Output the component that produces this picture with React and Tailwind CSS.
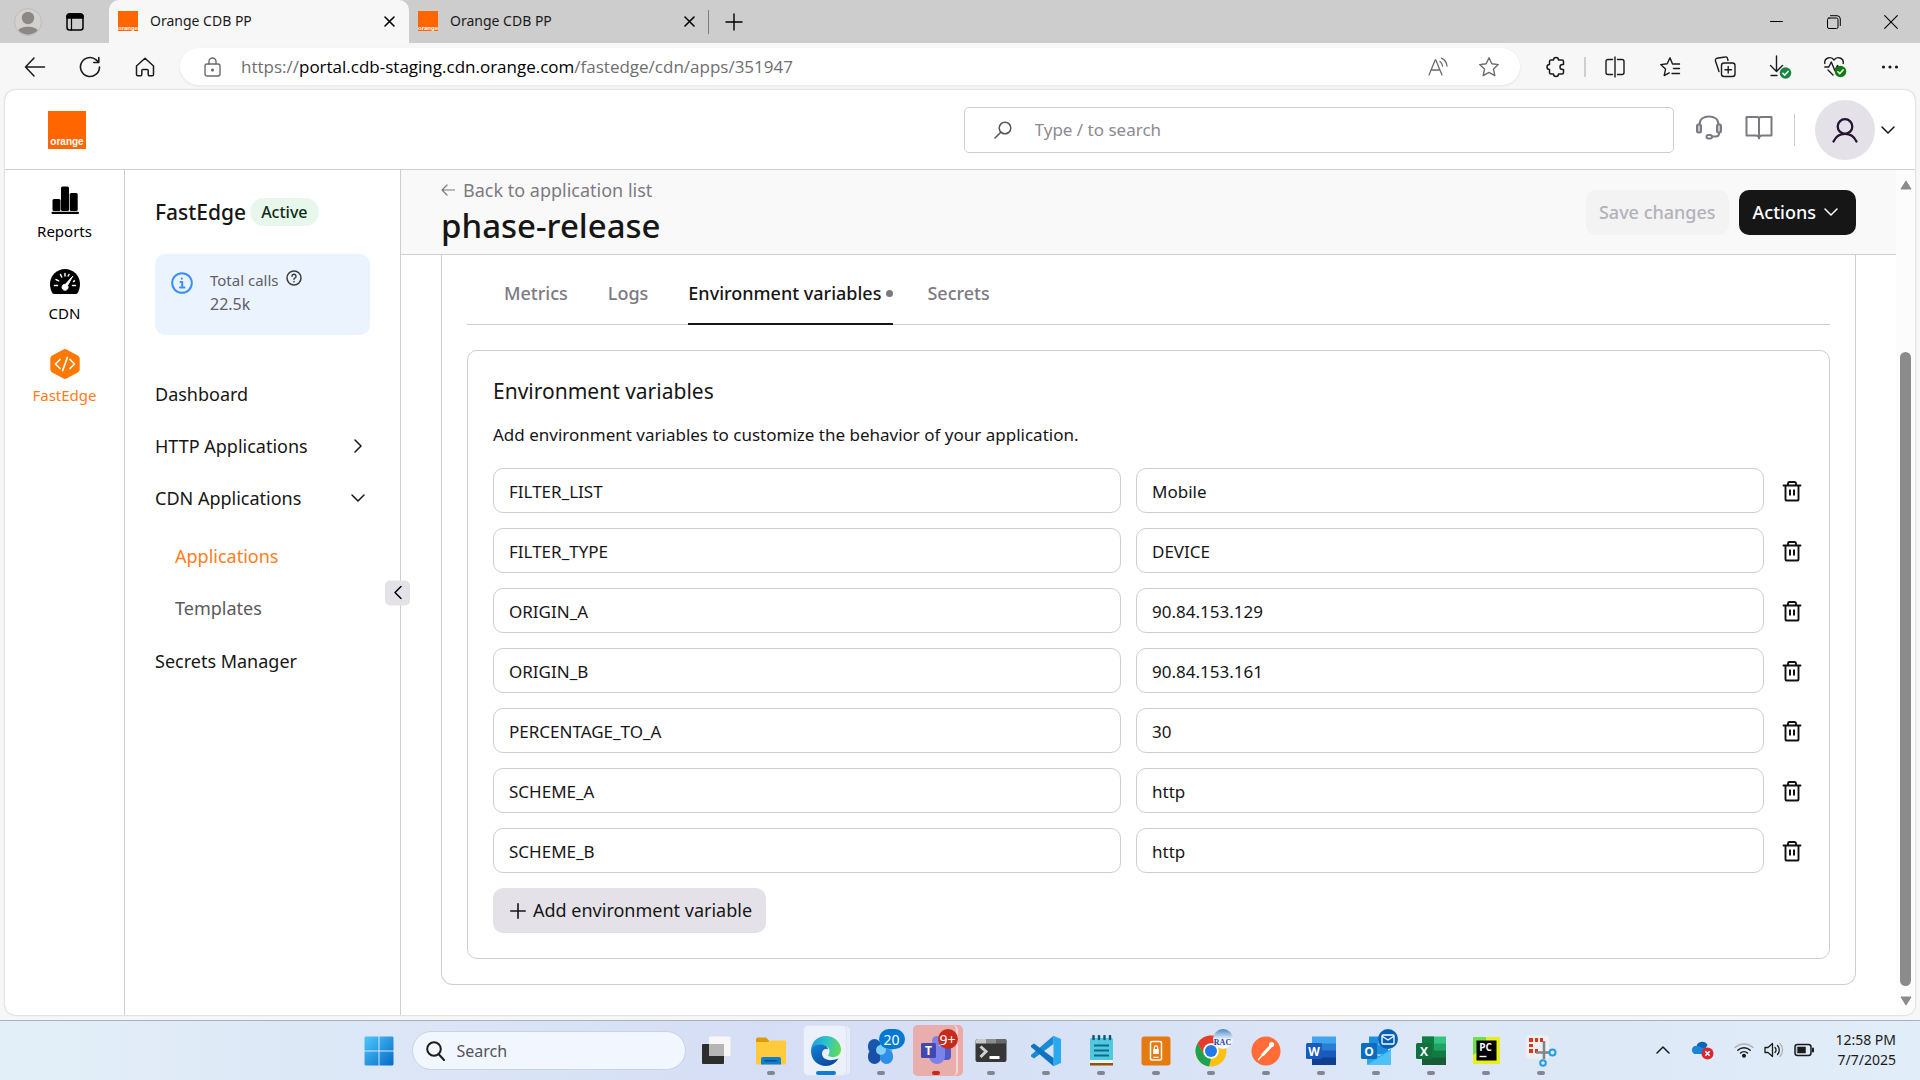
import React from "react";

const Svg = ({ w = 24, h, vb, sw = 1.5, className = "", children }) => (
  <svg
    width={w}
    height={h || w}
    viewBox={vb || `0 0 ${w} ${h || w}`}
    fill="none"
    stroke="currentColor"
    strokeWidth={sw}
    strokeLinecap="round"
    strokeLinejoin="round"
    className={`shrink-0 ${className}`}
    aria-hidden="true"
  >
    {children}
  </svg>
);

const Chevron = ({ d = "down", w = 14 }) => (
  <Svg w={w} vb="0 0 14 14" sw={1.5}>
    {d === "down" && <path d="M1 4l6 6 6-6" />}
    {d === "right" && <path d="M4 1l6 6-6 6" />}
    {d === "left" && <path d="M10 1L4 7l6 6" />}
    {d === "up" && <path d="M1 10l6-6 6 6" />}
  </Svg>
);

const OrangeLogo = ({ small }) =>
  small ? (
    <span className="flex h-5 w-5 shrink-0 items-end justify-center bg-[#ff6600] font-['Liberation_Sans'] text-[6px] leading-[6px] font-bold text-white">
      orange
    </span>
  ) : (
    <a
      href="#home"
      aria-label="Orange home"
      className="flex h-[38px] w-[38px] shrink-0 items-end justify-center bg-[#ff6600] pb-[2px] font-['Liberation_Sans'] text-[10px] leading-[10px] font-bold text-white"
    >
      orange
    </a>
  );

function BrowserTab({ active }) {
  return (
    <div
      className={`flex h-full w-[300px] items-center pl-[9px] pb-px ${
        active ? "rounded-t-[10px] bg-[#f7f7f7]" : ""
      }`}
    >
      <OrangeLogo small />
      <span className="ml-3 flex-1 text-[14px] leading-5 text-[#1b1b1b]">Orange CDB PP</span>
      <button type="button" aria-label="Close tab" className="mr-[14px] text-black">
        <Svg w={11} sw={1.6}>
          <path d="M1 1l9 9M10 1l-9 9" />
        </Svg>
      </button>
    </div>
  );
}

function TabStrip() {
  return (
    <div className="flex h-[43px] shrink-0 items-center bg-[#cdcdcd] pr-px">
      <button type="button" aria-label="Profile" className="ml-[14px]">
        <svg width="28" height="28" viewBox="0 0 28 28" className="block">
          <circle cx="14" cy="14" r="13.5" fill="#d3d1cd" stroke="#bdbbb8" />
          <circle cx="14" cy="10" r="6.2" fill="#8b8885" />
          <path d="M4.5 22.5c1.5-5 17.500-5 19 0a13 13 0 0 1-19 0z" fill="#8b8885" />
        </svg>
      </button>
      <button type="button" aria-label="Workspaces" className="mr-[25px] ml-6 text-black">
        <Svg w={18} sw={1.5}>
          <rect x="1" y="1" width="16" height="16" rx="2.500" />
          <path d="M1 5V3.500A2.500 2.500 0 0 1 3.500 1h11A2.500 2.500 0 0 1 17 3.500V5z" fill="currentColor" />
          <path d="M5.500 5v12" strokeWidth="1.2" />
        </Svg>
      </button>
      <BrowserTab active />
      <BrowserTab />
      <span className="-ml-px h-6 w-px bg-[#7c7c7c]" />
      <button type="button" aria-label="New tab" className="ml-4 text-black">
        <Svg w={18} sw={1.4}>
          <path d="M9 1v16M1 9h16" />
        </Svg>
      </button>
      <div className="ml-auto flex text-black">
        <button type="button" aria-label="Minimize" className="flex w-[57px] justify-center">
          <Svg w={13} sw={1}>
            <path d="M0.500 6.500h12" />
          </Svg>
        </button>
        <button type="button" aria-label="Restore" className="flex w-[57px] justify-center">
          <Svg w={14} sw={1}>
            <rect x="0.500" y="3" width="10.500" height="10.500" rx="1.500" />
            <path d="M3.500 0.700h6.500a3.300 3.300 0 0 1 3.300 3.300v6.500" />
          </Svg>
        </button>
        <button type="button" aria-label="Close" className="flex w-[57px] justify-center">
          <Svg w={14} sw={1.1}>
            <path d="M0.700 0.700l12.600 12.600M13.300 0.700L0.700 13.300" />
          </Svg>
        </button>
      </div>
    </div>
  );
}

const ToolButton = ({ label, children }) => (
  <button type="button" aria-label={label} className="flex w-[55px] justify-center">
    {children}
  </button>
);

const OkBadge = ({ cx, cy, fill }) => (
  <>
    <circle cx={cx} cy={cy} r="5.800" fill={fill} stroke="none" />
    <path d={`M${cx - 2.6} ${cy + 0.2}l1.900 1.900 3.300-3.700`} stroke="#fff" strokeWidth="1.500" />
  </>
);

function Toolbar() {
  return (
    <div className="flex h-[47px] shrink-0 items-center bg-[#f7f7f7] pr-[3px] pl-[7px] text-[#1b1b1b]">
      <ToolButton label="Back">
        <Svg w={22} sw={1.5}>
          <path d="M10 2L1.500 11l8.500 9M1.500 11h19" />
        </Svg>
      </ToolButton>
      <ToolButton label="Refresh">
        <Svg w={22} sw={1.6}>
          <path d="M20.500 11a9.500 9.500 0 1 1-3.300-7.200l2.300 2.200M19.800 1.500v5h-5" />
        </Svg>
      </ToolButton>
      <ToolButton label="Home">
        <Svg w={20} sw={1.5}>
          <path d="M1.500 9L10 1.200 18.500 9v8.500a1.300 1.300 0 0 1-1.300 1.300h-2.700a1.300 1.300 0 0 1-1.300-1.300V13.500a1 1 0 0 0-1-1H7.800a1 1 0 0 0-1 1v4a1.300 1.300 0 0 1-1.300 1.300H2.800a1.300 1.300 0 0 1-1.300-1.300z" />
        </Svg>
      </ToolButton>
      <div className="ml-2 flex h-[37px] flex-1 items-center rounded-full bg-white pr-5 pl-6 shadow-[0_1px_3px_rgba(0,0,0,0.08)]">
        <Svg w={17} h={20} sw={1.400} className="text-[#6b6b6b]">
          <rect x="1" y="7" width="15" height="12" rx="2" />
          <path d="M5 7V4.500a3.500 3.500 0 0 1 7 0V7" />
          <circle cx="8.500" cy="13" r="0.900" fill="currentColor" />
        </Svg>
        <p className="ml-5 flex-1 font-['Open_Sans',sans-serif] text-[17px] leading-6 text-[#6e6e6e]">
          https://<span className="text-black">portal.cdb-staging.cdn.orange.com</span>/fastedge/cdn/apps/351947
        </p>
        <button type="button" aria-label="Read aloud" className="mr-[30px] text-[#6b6b6b]">
          <Svg w={20} sw={1.300}>
            <path d="M1 18L7.200 3h.6L14 18M3 13h9M12 4.500a6 6 0 0 1 2.500 4.500M13.500 1.200A10 10 0 0 1 19 9" />
          </Svg>
        </button>
        <button type="button" aria-label="Add to favorites" className="text-[#6b6b6b]">
          <Svg w={22} sw={1.400}>
            <path d="M11 1.800l2.800 6 6.500.8-4.800 4.500 1.300 6.500L11 16.400l-5.800 3.200 1.300-6.500L1.700 8.600l6.500-.8z" />
          </Svg>
        </button>
      </div>
      <div className="ml-2 flex items-center">
        <ToolButton label="Extensions">
          <Svg w={22} sw={1.500}>
            <path d="M4.500 5.500A1.500 1.500 0 0 1 6 4h2.500a2.500 2.500 0 0 1 5 0H17a1.500 1.500 0 0 1 1.500 1.500v3h-1a2.500 2.500 0 0 0 0 5h1v3A1.500 1.500 0 0 1 17 18h-3.500a2.500 2.500 0 0 1-5 0H6a1.500 1.500 0 0 1-1.500-1.500v-3a2.500 2.500 0 0 1 0-5z" />
          </Svg>
        </ToolButton>
        <span className="mx-px h-5 w-0.5 bg-[#cfcfcf]" />
        <ToolButton label="Split screen">
          <Svg w={22} sw={1.400}>
            <path d="M11 1v20M8.500 3.500H4A2 2 0 0 0 2 5.500v11a2 2 0 0 0 2 2h4.500M13.500 3.500H18a2 2 0 0 1 2 2v11a2 2 0 0 1-2 2h-4.500" />
          </Svg>
        </ToolButton>
        <ToolButton label="Favorites">
          <Svg w={22} sw={1.400}>
            <path d="M20.500 8h-7L11 1.800l-2.800 6-6.500.8 4.800 4.500-1.300 6.500 5-2.800M14.500 12.500h6M13 17.500h7.500" />
          </Svg>
        </ToolButton>
        <ToolButton label="Collections">
          <Svg w={22} sw={1.400}>
            <path d="M5 15.500L1.500 5a2.200 2.200 0 0 1 1.500-2.800L11 1a2 2 0 0 1 2.500 1.500l.5 2" />
            <rect x="7.500" y="7" width="13.500" height="13.500" rx="2.500" />
            <path d="M14.200 10.500v6.500M11 13.700h6.500" />
          </Svg>
        </ToolButton>
        <ToolButton label="Downloads">
          <Svg w={24} sw={1.400}>
            <path d="M8.500 1v15M2.500 10.500l6 6 6-6M3 20.500h6" />
            <OkBadge cx={17.500} cy={18} fill="#1a8540" />
          </Svg>
        </ToolButton>
        <ToolButton label="Browser essentials">
          <Svg w={24} sw={1.400}>
            <path d="M1.800 8.500C1 3 8 .5 11 5c3-4.500 10-2 9.200 3.500M1.800 12h4l2.500-5 3.500 8.500 2.700-5 1 1.500h3M5 15l5 5" />
            <OkBadge cx={17.500} cy={16.500} fill="#107c10" />
          </Svg>
        </ToolButton>
        <ToolButton label="More">
          <Svg w={18} h={6} sw={0}>
            <g fill="currentColor">
              <circle cx="2.500" cy="3" r="1.600" />
              <circle cx="9" cy="3" r="1.600" />
              <circle cx="15.500" cy="3" r="1.600" />
            </g>
          </Svg>
        </ToolButton>
      </div>
    </div>
  );
}

function AppHeader() {
  return (
    <header className="flex h-20 shrink-0 items-center justify-end border-b border-[#cfcdd2] pr-5 pl-[43px]">
      <div className="mr-auto">
        <OrangeLogo />
      </div>
      <div className="flex h-[46px] w-[37vw] items-center rounded-[5px] border border-[#cfcdd2] px-[29px]">
        <Svg w={18} sw={1.500} className="text-[#55525b]">
          <circle cx="11" cy="7" r="5.800" />
          <path d="M6.800 11.200L1 17" />
        </Svg>
        <input
          type="text"
          aria-label="Search"
          placeholder="Type / to search"
          className="ml-[23px] w-full text-[17px] leading-6 outline-none placeholder:text-[#8d8a92]"
        />
      </div>
      <button type="button" aria-label="Support" className="ml-[21px] pb-1 text-[#7d7982]">
        <Svg w={28} sw={2}>
          <path d="M4.500 11v-.5C4.500 5.500 8.500 2.500 14 2.500s9.500 3 9.500 8v.5M24 18v1.500a3 3 0 0 1-3 3h-4" />
          <rect x="2" y="10.500" width="4" height="8" rx="1.500" fill="#c9c7cc" />
          <rect x="22" y="10.500" width="4" height="8" rx="1.500" fill="#c9c7cc" />
          <rect x="11.500" y="21" width="5.500" height="3.500" rx="1.700" />
        </Svg>
      </button>
      <button type="button" aria-label="Documentation" className="ml-[22px] pb-1 text-[#7d7982]">
        <Svg w={28} h={26} sw={2}>
          <path d="M14 3.500A2 2 0 0 0 12 2H1.500v18.500H11a3 3 0 0 1 3 3 3 3 0 0 1 3-3h9.500V2H16a2 2 0 0 0-2 1.500zM14 3.500V23" />
        </Svg>
      </button>
      <span className="ml-[21px] h-8 w-px bg-[#cfcdd2]" />
      <button
        type="button"
        aria-label="Account"
        className="ml-5 flex items-center gap-[6px] text-[#161616]"
      >
        <span className="flex h-[60px] w-[60px] items-center justify-center rounded-full bg-[#e4e2e8] text-[#261433]">
          <Svg w={26} h={26} sw={2.300}>
            <circle cx="13" cy="9.500" r="7.300" />
            <path d="M1.500 24.500C4 19 8 16.800 13 16.800s9 2.200 11.500 7.700" />
          </Svg>
        </span>
        <Chevron />
      </button>
    </header>
  );
}

const railItems = [
  {
    label: "Reports",
    icon: (
      <svg width="28" height="30" viewBox="0 0 28 30" fill="currentColor">
        <rect x="1.500" y="14" width="8" height="12" rx="1.500" />
        <rect x="10" y="1.500" width="8" height="24.500" rx="1.500" />
        <rect x="18.700" y="8" width="8" height="18" rx="1.500" />
        <rect x="0.500" y="26.800" width="27.500" height="2.200" rx="1" />
      </svg>
    ),
  },
  {
    label: "CDN",
    icon: (
      <svg width="30" height="30" viewBox="0 0 30 30">
        <path d="M15 2C7 2 0 8.500 0 17c0 4 1.200 7 2.500 9.200.4.600.8.800 1.500.8h22c.7 0 1.100-.2 1.500-.8C28.800 24 30 21 30 17 30 8.500 23 2 15 2z" fill="currentColor" />
        <g stroke="#fff" strokeWidth="1.500" strokeLinecap="round">
          <path d="M4.500 18.500h3M22.500 18.500h3M6 12.500l2.600 1.300M10.500 7.500l1.200 2.500M15 6.500v2.500M19 7.500l-.8 1.500M23.500 14.500l1-.6" />
        </g>
        <path d="M22.700 9.200L17.500 18.500a3 3 0 1 1-2-1.200z" fill="#fff" stroke="#fff" strokeWidth="1" />
      </svg>
    ),
  },
  {
    label: "FastEdge",
    active: true,
    icon: (
      <svg width="30" height="30" viewBox="0 0 30 30">
        <path d="M13 .7a4 4 0 0 1 4 0l10.800 5.800a3.500 3.500 0 0 1 1.900 3V20.500a3.500 3.500 0 0 1-1.900 3L17 29.300a4 4 0 0 1-4 0L2.200 23.500a3.500 3.500 0 0 1-1.900-3V9.500a3.500 3.500 0 0 1 1.900-3z" fill="#ff7900" />
        <path d="M10 10.500L5.500 15l4.500 4.500M20 10.500l4.500 4.500-4.500 4.500M17.300 8.500l-4.600 13" fill="none" stroke="#fff" strokeWidth="1.700" strokeLinecap="round" strokeLinejoin="round" />
      </svg>
    ),
  },
];

function Rail() {
  return (
    <nav aria-label="Products" className="flex w-[120px] shrink-0 flex-col gap-[26px] border-r border-[#cfcdd2] pt-[15px]">
      {railItems.map((it) => (
        <a
          key={it.label}
          href={`#${it.label.toLowerCase()}`}
          className={`flex flex-col items-center text-[15px] leading-5 ${
            it.active ? "text-[#ff7d1a]" : "text-black"
          }`}
        >
          <span className="mb-[6px] flex h-[30px] items-center">{it.icon}</span>
          {it.label}
        </a>
      ))}
    </nav>
  );
}

const sideRow = "flex h-[52px] w-full items-center justify-between";

function Sidebar() {
  return (
    <aside className="relative w-[276px] shrink-0 border-r border-[#cfcdd2] px-[30px] pt-7 text-[#161616]">
      <div className="flex items-center gap-1">
        <h2 className="text-[21px] leading-7 font-medium">FastEdge</h2>
        <span className="rounded-full bg-[#e8f7ec] px-[11px] text-[16px] leading-7 font-medium text-[#0f2b17]">
          Active
        </span>
      </div>
      <div className="mt-7 flex h-[81px] rounded-[10px] bg-[#ebf3fe] pt-[14px] pl-4 text-[#5f5f66]">
        <Svg w={22} sw={2} className="mt-1 text-[#3b8ff5]">
          <circle cx="11" cy="11" r="9.800" />
          <path d="M9.500 10h1.700v5.200M9 15.500h4.500M10.800 6.500v.2" />
        </Svg>
        <div className="ml-[17px]">
          <p className="flex items-center gap-[7px] text-[15px] leading-6">
            Total calls
            <Svg w={16} sw={1.500} className="mb-1 text-[#3c3c42]">
              <circle cx="8" cy="8" r="7" />
              <path d="M6 6.300a2 2 0 1 1 2.800 1.800c-.6.300-.8.600-.8 1.100M8 11.600v.1" />
            </Svg>
          </p>
          <p className="text-[16px] leading-6">22.5k</p>
        </div>
      </div>
      <nav aria-label="FastEdge" className="mt-[33px] text-[18px] leading-6">
        <a href="#dashboard" className={sideRow}>Dashboard</a>
        <button type="button" className={sideRow}>
          HTTP Applications
          <span className="mr-[5px]"><Chevron d="right" /></span>
        </button>
        <button type="button" className={sideRow}>
          CDN Applications
          <span className="mr-[5px]"><Chevron /></span>
        </button>
        <div className="pt-[6px] pb-px pl-5">
          <a href="#applications" className={`${sideRow} text-[#ff7d1a]`}>Applications</a>
          <a href="#templates" className={`${sideRow} text-[#5a5a5a]`}>Templates</a>
        </div>
        <a href="#secrets-manager" className={sideRow}>Secrets Manager</a>
      </nav>
      <button
        type="button"
        aria-label="Collapse sidebar"
        className="absolute top-1/2 -right-[10px] flex h-[25px] w-[25px] -translate-y-1/2 items-center justify-center rounded-[5px] bg-[#e4e2e8] text-black"
      >
        <Chevron d="left" />
      </button>
    </aside>
  );
}

const variables = [
  ["FILTER_LIST", "Mobile"],
  ["FILTER_TYPE", "DEVICE"],
  ["ORIGIN_A", "90.84.153.129"],
  ["ORIGIN_B", "90.84.153.161"],
  ["PERCENTAGE_TO_A", "30"],
  ["SCHEME_A", "http"],
  ["SCHEME_B", "http"],
];

const field =
  "h-[45px] w-full min-w-0 rounded-[10px] border border-[#cfcdd2] px-[15px] pt-px text-[17px] leading-6 text-[#161616] outline-none";

function Content() {
  return (
    <main className="flex min-w-0 flex-1 flex-col">
      <div className="flex h-[85px] shrink-0 items-center justify-between border-b border-[#cfcdd2] bg-[#f9f9f9] px-10">
        <div className="pt-[3px]">
          <a href="#apps" className="flex items-center gap-2 text-[18px] leading-6 text-[#7d7982]">
            <Svg w={14} sw={1.200}>
              <path d="M6 2L1 7l5 5M1 7h12.500" />
            </Svg>
            Back to application list
          </a>
          <h1 className="text-[33px] leading-[48px] font-medium text-[#161616]">phase-release</h1>
        </div>
        <div className="flex gap-[10px]">
          <button type="button" disabled className="h-[45px] rounded-[10px] bg-[#f3f3f3] px-[13px] text-[18px] font-medium text-[#b4b1b9]">
            Save changes
          </button>
          <button type="button" className="flex h-[45px] items-center gap-2 rounded-[10px] bg-[#161616] pr-[18px] pl-[14px] text-[18px] font-medium text-white">
            Actions
            <Chevron />
          </button>
        </div>
      </div>
      <div className="mx-10 rounded-b-[12px] border-x border-b border-[#cfcdd2] px-[25px] pb-[25px]">
        <div role="tablist" className="flex h-[70px] gap-10 border-b border-[#cfcdd2] pl-[37px] text-[18px] font-medium text-[#7d7982]">
          <button type="button" role="tab" aria-selected="false" className="pt-2">Metrics</button>
          <button type="button" role="tab" aria-selected="false" className="pt-2">Logs</button>
          <button
            type="button"
            role="tab"
            aria-selected="true"
            className="-mb-px flex items-center gap-[5px] border-b-2 border-[#161616] pt-2 text-[#161616]"
          >
            Environment variables
            <span className="h-[7px] w-[7px] rounded-full bg-[#7d7982]" />
          </button>
          <button type="button" role="tab" aria-selected="false" className="-ml-1.5 pt-2">Secrets</button>
        </div>
        <section className="mt-[25px] rounded-[10px] border border-[#cfcdd2] p-[25px] text-[#161616]">
          <h2 className="text-[21px] leading-[30px]">Environment variables</h2>
          <p className="mt-4 mb-5 text-[17px] leading-[26px]">
            Add environment variables to customize the behavior of your application.
          </p>
          <div className="flex flex-col gap-[15px]">
            {variables.map(([name, value]) => (
              <div key={name} className="grid grid-cols-[1fr_1fr_25px] items-center gap-[15px]">
                <input type="text" aria-label="Variable name" defaultValue={name} className={field} />
                <input type="text" aria-label={`${name} value`} defaultValue={value} className={field} />
                <button type="button" aria-label={`Delete ${name}`} className="flex justify-center text-[#111]">
                  <Svg w={20} h={22} sw={1.900}>
                    <path d="M1.500 5.500h17M3.500 5.500v14a1 1 0 0 0 1 1h11a1 1 0 0 0 1-1v-14M6 5V3.500a1.500 1.500 0 0 1 1.500-1.500h5A1.500 1.500 0 0 1 14 3.500V5" />
                    <path d="M8 9.500v6M12 9.500v6" strokeWidth="2" strokeLinecap="butt" />
                  </Svg>
                </button>
              </div>
            ))}
          </div>
          <button type="button" className="mt-[15px] flex h-[45px] items-center gap-[7px] rounded-[10px] bg-[#e4e2e8] pr-[14px] pl-[17px] text-[18px]">
            <Svg w={16} sw={1.600}>
              <path d="M8 0.800v14.400M0.800 8h14.400" />
            </Svg>
            Add environment variable
          </button>
        </section>
      </div>
    </main>
  );
}

function Scrollbar() {
  return (
    <div className="flex w-[19px] shrink-0 flex-col items-center bg-[#fcfcfc] pt-[10px] pb-[9px]">
      <svg width="12" height="10" viewBox="0 0 12 10" className="shrink-0" fill="#8b8b8b">
        <path d="M6 1l5 8H1z" stroke="#8b8b8b" strokeLinejoin="round" />
      </svg>
      <span className="w-px flex-[162]" />
      <span className="w-[11px] flex-[634] rounded-full bg-[#8b8b8b]" />
      <svg width="12" height="10" viewBox="0 0 12 10" className="mt-[10px] shrink-0" fill="#8b8b8b">
        <path d="M6 9l5-8H1z" stroke="#8b8b8b" strokeLinejoin="round" />
      </svg>
    </div>
  );
}

const AppSvg = ({ children }) => (
  <svg width="32" height="32" viewBox="0 0 32 32" aria-hidden="true">{children}</svg>
);

const Glyph = ({ x, y, s = 12, children }) => (
  <text x={x} y={y} fontSize={s} fontWeight="700" textAnchor="middle" fill="#fff" fontFamily="Open Sans, sans-serif">
    {children}
  </text>
);

const OfficeIcon = ({ letter, c }) => (
  <AppSvg>
    <rect x="7" y="1.500" width="24" height="7.500" fill={c[0]} />
    <rect x="7" y="8.500" width="24" height="7.500" fill={c[1]} />
    <rect x="7" y="15.500" width="24" height="7.500" fill={c[2]} />
    <rect x="7" y="22.500" width="24" height="7.500" fill={c[3]} />
    {letter === "X" && <path d="M7 1.500h12v21H7z" fill="#107c41" />}
    <rect x="1" y="8" width="16" height="16" rx="1.500" fill={c[4]} />
    <Glyph x="9" y="20.500">{letter}</Glyph>
  </AppSvg>
);

const apps = [
  {
    name: "Task View",
    idle: true,
    icon: (
      <AppSvg>
        <rect x="2" y="9" width="22" height="20" rx="1" fill="#2d2d2d" />
        <rect x="9" y="1.500" width="21.500" height="19.500" rx="1" fill="#f7f7f7" />
        <path d="M9 9h15v12H9z" fill="#b5b5b5" />
      </AppSvg>
    ),
  },
  {
    name: "File Explorer",
    icon: (
      <AppSvg>
        <path d="M1 4.500a2 2 0 0 1 2-2h8l3 3v5H1z" fill="#dd9a08" />
        <path d="M1 7h12l2-1.500h16V28a1.500 1.500 0 0 1-1.500 1.500h-27A1.500 1.500 0 0 1 1 28z" fill="#ffcb3d" />
        <path d="M6 29.500V24a2 2 0 0 1 2-2h16a2 2 0 0 1 2 2v5.500z" fill="#0f7fd0" />
        <path d="M9.500 25.800h13" stroke="#0a4f8f" strokeWidth="1.500" />
      </AppSvg>
    ),
  },
  {
    name: "Microsoft Edge",
    focus: true,
    icon: (
      <AppSvg>
        <defs>
          <linearGradient id="edgeTop" x1="0" y1="0.300" x2="1" y2="0.500">
            <stop offset="0" stopColor="#1b9de2" />
            <stop offset="0.500" stopColor="#2fc3c8" />
            <stop offset="1" stopColor="#62dc55" />
          </linearGradient>
          <linearGradient id="edgeLow" x1="0" y1="0" x2="0.600" y2="1">
            <stop offset="0" stopColor="#1583d8" />
            <stop offset="1" stopColor="#0c4a9c" />
          </linearGradient>
        </defs>
        <path d="M1 15C1.500 6.500 8 1 16 1s15 6 15 13.500c0 5-4 7.500-8 7.500-3.500 0-5.500-1-4.500-2.500 2.500-3.500.5-9-5.500-9C7 10.500 2 12 1 15z" fill="url(#edgeTop)" />
        <path d="M1 16c0-4 5-7 10-6.500 5 .3 7 3 7 5-3-1.500-6 .5-6 4 0 5 6 9 16.500 5C26 28 21 31 16 31 7.500 31 1 24.500 1 16z" fill="url(#edgeLow)" />
      </AppSvg>
    ),
  },
  {
    name: "Outlook contacts",
    badge: "20",
    icon: (
      <AppSvg>
        <rect x="3" y="4" width="13" height="15" rx="6.500" fill="#1559ad" />
        <rect x="15" y="4" width="13" height="15" rx="6.500" fill="#4fb3f2" />
        <rect x="3" y="14" width="13" height="15" rx="6.500" fill="#1b4fa5" />
        <rect x="15" y="14" width="13" height="15" rx="6.500" fill="#2f8fe6" />
        <circle cx="16" cy="15" r="5" fill="#7fd0fa" />
      </AppSvg>
    ),
  },
  {
    name: "Microsoft Teams",
    badge: "9+",
    alert: true,
    icon: (
      <AppSvg>
        <circle cx="26" cy="7" r="3.500" fill="#5059c9" />
        <rect x="18" y="11" width="13" height="14" rx="4" fill="#5059c9" />
        <circle cx="17" cy="6" r="5" fill="#7b83eb" />
        <path d="M9 11h16v10a8 8 0 0 1-16 0z" fill="#7b83eb" />
        <rect x="1" y="8" width="15" height="15" rx="1.500" fill="#4248b0" />
        <Glyph x="8.500" y="20">T</Glyph>
      </AppSvg>
    ),
  },
  {
    name: "Terminal",
    icon: (
      <AppSvg>
        <path d="M.5 6a2 2 0 0 1 2-2h27a2 2 0 0 1 2 2v19a2 2 0 0 1-2 2h-27a2 2 0 0 1-2-2z" fill="#363636" />
        <path d="M.5 8.500V6a2 2 0 0 1 2-2H11v4.500z" fill="#c8c8c8" />
        <path d="M11 4h10v4.500H11z" fill="#8d8d8d" />
        <path d="M21 4h8.500a2 2 0 0 1 2 2v2.500H21z" fill="#686868" />
        <path d="M5.500 11.500l5.500 5-5.500 5.500" fill="none" stroke="#d0d0d0" strokeWidth="3" />
        <path d="M14.500 22.500h10" stroke="#fff" strokeWidth="3" />
      </AppSvg>
    ),
  },
  {
    name: "Visual Studio Code",
    icon: (
      <AppSvg>
        <path d="M23.500.8L31 4v24l-7.500 3.200z" fill="#29a9f2" />
        <path d="M23.500.8V9L4 23.500 1 21.500v-1.500z" fill="#1a8ad4" />
        <path d="M23.500 31.200V23L4 8.500 1 10.500V12z" fill="#0f74c0" />
      </AppSvg>
    ),
  },
  {
    name: "Notepad",
    icon: (
      <AppSvg>
        <path d="M5 27h23v3.500H5z" fill="#9a5200" />
        <rect x="5" y="3" width="23" height="25" rx="1.500" fill="#50c8de" />
        <path d="M5 25h23v3H5z" fill="#e9f5f8" />
        <path d="M8.500 1v3M14 1v3M19.500 1v3M25 1v3" stroke="#0b5c78" strokeWidth="2.500" strokeLinecap="round" />
        <path d="M9 10.500h15M9 15.500h15M9 20.500h15" stroke="#0a6a89" strokeWidth="1.800" />
      </AppSvg>
    ),
  },
  {
    name: "Secure mobile",
    icon: (
      <AppSvg>
        <rect x="1.500" y="1.500" width="29" height="29" rx="3" fill="#e57a10" />
        <rect x="10.500" y="6.500" width="11" height="18.500" rx="1.500" fill="none" stroke="#fff" strokeWidth="1.500" />
        <rect x="13.200" y="14" width="5.600" height="5" fill="#fff" />
        <path d="M14.300 14v-1.500a1.700 1.700 0 0 1 3.400 0V14M13.500 22.300h5" fill="none" stroke="#fff" strokeWidth="1.200" />
      </AppSvg>
    ),
  },
  {
    name: "Google Chrome",
    icon: (
      <AppSvg>
        <circle cx="16" cy="16" r="15.500" fill="#fbc116" />
        <path d="M2.600 8.200A15.500 15.500 0 0 1 29.400 8.200H16L9.300 19.900z" fill="#e33b2e" />
        <path d="M2.600 8.200L9.300 19.900 16 23.700l-2 7.700A15.500 15.500 0 0 1 2.600 8.200z" fill="#1ea151" />
        <circle cx="16" cy="16" r="7.800" fill="#fff" />
        <circle cx="16" cy="16" r="6" fill="#2478e8" />
      </AppSvg>
    ),
    overlay: "rac",
  },
  {
    name: "Postman",
    icon: (
      <AppSvg>
        <circle cx="16" cy="16" r="14.500" fill="#ff6c37" />
        <circle cx="21.500" cy="9.500" r="2.600" fill="#fff" />
        <path d="M20.500 11.500l-7.500 8" stroke="#fff" strokeWidth="3.200" strokeLinecap="round" />
        <path d="M13 19.500l-4.500 5" stroke="#fff" strokeWidth="1.500" strokeLinecap="round" />
      </AppSvg>
    ),
  },
  { name: "Word", icon: <OfficeIcon letter="W" c={["#41a5ee", "#2b7cd3", "#185abd", "#103f91", "#185abd"]} /> },
  {
    name: "Outlook",
    icon: (
      <AppSvg>
        <rect x="9" y="1.500" width="19" height="18" fill="#1d8fe0" />
        <path d="M18 1.500h10v9H18z" fill="#50b9f5" />
        <path d="M7 14l12 7 12-7v14.500a1.500 1.500 0 0 1-1.500 1.500h-21A1.500 1.500 0 0 1 7 28.500z" fill="#28a8ea" />
        <path d="M7 30l24-15v13.500a1.500 1.500 0 0 1-1.500 1.500z" fill="#4cc2f7" />
        <rect x="1" y="8" width="16" height="16" rx="1.500" fill="#0f6cbd" />
        <Glyph x="9" y="20.500">O</Glyph>
      </AppSvg>
    ),
    overlay: "mail",
  },
  { name: "Excel", icon: <OfficeIcon letter="X" c={["#33c481", "#21a366", "#107c41", "#185c37", "#0f7040"]} /> },
  {
    name: "PyCharm",
    icon: (
      <AppSvg>
        <rect x="3" y="2" width="27" height="27" fill="#e6ef1c" />
        <path d="M3 2h13v10L3 20z" fill="#6fe04a" />
        <rect x="6.500" y="5.500" width="20" height="20" fill="#000" />
        <Glyph x="15.500" y="16" s={10}>PC</Glyph>
        <path d="M9.500 21.500h7" stroke="#fff" strokeWidth="1.400" />
      </AppSvg>
    ),
  },
  {
    name: "Snipping Tool",
    icon: (
      <AppSvg>
        <rect x="1" y="0.500" width="23" height="23" rx="2" fill="#efeff1" />
        <path d="M4 3h4v4H4zM10 3h3v4h-3zM15 3h3v4h-3zM4 9h4v3H4zM4 14h4v4H4zM10 14h3v4h-3z" fill="#d8371a" />
        <path d="M19 6v18M11 17.500h14" stroke="#7f858c" strokeWidth="2.600" />
        <circle cx="27.500" cy="17.500" r="3" fill="none" stroke="#1d9fe0" strokeWidth="2" />
        <circle cx="18" cy="28" r="2.800" fill="none" stroke="#1d9fe0" strokeWidth="2" />
      </AppSvg>
    ),
  },
];

function TaskbarApp({ app }) {
  return (
    <button type="button" aria-label={app.name} className="relative flex h-full w-[55px] items-center justify-center">
      {app.focus && (
        <>
          <span className="absolute inset-y-[4px] left-1 w-[48px] rounded-[5px] border border-[#d5dbea] bg-white/40" />
          <span className="absolute inset-y-[4px] left-1 w-[44px] rounded-[5px] border border-[#dde3f0] bg-[#ebf0fb]" />
        </>
      )}
      {app.alert && (
        <>
          <span className="absolute inset-y-[4px] left-1 w-[50px] rounded-[5px] bg-[#edaaa8]" />
          <span className="absolute inset-y-[4px] left-1 w-[45px] rounded-[5px] border-r-2 border-[#f3d6da] bg-[#e9aeab]" />
        </>
      )}
      <span className="relative">{app.icon}</span>
      {app.badge && (
        <span
          className={`absolute top-2 flex items-center justify-center rounded-full text-white ${
            app.alert
              ? "left-[29px] h-5 w-5 bg-[#c42b1c] text-[14px]"
              : "left-[25px] h-5 w-[26px] bg-[#0078d4] text-[14px]"
          }`}
        >
          {app.badge}
        </span>
      )}
      {app.overlay === "mail" && (
        <span className="absolute top-2 left-[29px] flex h-5 w-5 items-center justify-center rounded-full bg-[#0560b5] text-white">
          <Svg w={14} h={11} sw={1.300}>
            <rect x="1" y="1" width="12" height="9" rx="1" />
            <path d="M1.500 2.500L7 6l5.500-3.500" />
          </Svg>
        </span>
      )}
      {app.overlay === "rac" && (
        <span className="absolute top-2 left-[29px] flex h-5 w-5 items-end justify-center rounded-full bg-linear-to-b from-[#4d86bf] via-[#e8f1fa] via-50% to-white pb-[2px] font-['Liberation_Serif'] text-[8px] leading-[9px] font-bold text-[#2a3f9c]">
          RAC
        </span>
      )}
      {!app.idle && (
        <span
          className={`absolute bottom-[5px] h-1 rounded-full ${
            app.focus ? "w-5 bg-[#0f7cd6]" : app.alert ? "w-2 bg-[#c42b1c]" : "w-2 bg-[#83868f]"
          }`}
        />
      )}
    </button>
  );
}

function Taskbar() {
  return (
    <footer className="grid h-[60px] shrink-0 grid-cols-[1fr_auto_1fr] items-center border-t border-[#a9b0bd] bg-linear-to-r from-[#e3eff8] via-[#d5def5] via-40% to-[#e1edf8]">
      <span />
      <div className="flex h-full items-center">
        <button type="button" aria-label="Start" className="flex w-[55px] justify-center">
          <svg width="30" height="30" viewBox="0 0 30 30">
            <defs>
              <linearGradient id="win" x1="0" y1="0" x2="1" y2="1">
                <stop offset="0" stopColor="#4cc9fb" />
                <stop offset="1" stopColor="#0669c8" />
              </linearGradient>
            </defs>
            <path d="M1.500 0.500H14.500V14.500H0.500V1.500zM15.500 0.500H28.500L29.500 1.500V14.500H15.500zM0.500 15.500H14.500V29.500H1.500L0.500 28.500zM15.500 15.500H29.500V28.500L28.500 29.500H15.500z" fill="url(#win)" />
          </svg>
        </button>
        <label className="mr-[3px] ml-[5px] flex h-[39px] w-[274px] items-center rounded-full border border-[#c9d2e4] bg-[#f2f6fe] pl-[13px] text-[#1d1d1d]">
          <Svg w={19} h={20} sw={2}>
            <circle cx="8" cy="8" r="6.800" />
            <path d="M13 13.500l5 5.500" />
          </Svg>
          <input
            type="text"
            aria-label="Search"
            placeholder="Search"
            className="ml-3 w-full text-[16px] outline-none placeholder:text-[#51555c]"
          />
        </label>
        {apps.map((app) => (
          <TaskbarApp key={app.name} app={app} />
        ))}
      </div>
      <div className="flex items-center justify-end pr-6 pb-px text-[#1b1b1b]">
        <button type="button" aria-label="Show hidden icons"><Chevron d="up" /></button>
        <svg width="22" height="20" viewBox="0 0 22 20" className="ml-[22px]">
          <path d="M4 14a4 4 0 0 1 .5-8A6 6 0 0 1 15.500 5L10 14z" fill="#0f63b5" />
          <path d="M4.500 14a4 4 0 0 1-.5-8c4-.5 6 3 13 3v5z" fill="#1685dc" />
          <circle cx="15.500" cy="13.500" r="6" fill="#dc2433" />
          <path d="M13.300 11.300l4.400 4.400M17.700 11.300l-4.400 4.400" stroke="#fff" strokeWidth="1.500" />
        </svg>
        <Svg w={20} h={16} sw={1.500} className="ml-[20px]">
          <path d="M1 5.500a13 13 0 0 1 18 0" stroke="#a9b3bd" />
          <path d="M3.800 8.300a9 9 0 0 1 12.400 0M6.500 11a5.200 5.200 0 0 1 7 0" />
          <circle cx="10" cy="13.800" r="1.300" fill="currentColor" />
        </Svg>
        <Svg w={20} h={16} sw={1.300} className="ml-[10px]">
          <path d="M1 5.500h3l4.500-4v13l-4.500-4H1zM11 5.500a3.500 3.500 0 0 1 0 5M13.500 3.500a6.500 6.500 0 0 1 0 9" />
          <path d="M16 1.500a9.500 9.500 0 0 1 0 13" stroke="#a9b3bd" />
        </Svg>
        <Svg w={21} h={14} sw={1.500} className="ml-[10px]">
          <rect x="1" y="1.500" width="16" height="11" rx="2.500" />
          <rect x="3.500" y="4" width="8" height="6" fill="currentColor" strokeWidth="0.500" />
          <path d="M19 5.500v3" strokeWidth="2" />
        </Svg>
        <div className="ml-5 text-right text-[14px] leading-5">
          <p>12:58 PM</p>
          <p>7/7/2025</p>
        </div>
      </div>
    </footer>
  );
}

export default function App() {
  return (
    <div className="flex h-screen flex-col bg-[#f7f7f7] font-['Noto_Sans',sans-serif]">
      <TabStrip />
      <Toolbar />
      <div className="mx-[5px] mb-[5px] flex min-h-0 flex-1 flex-col overflow-hidden rounded-[10px] bg-white shadow-[0_0_2px_rgba(0,0,0,0.3)]">
        <AppHeader />
        <div className="flex min-h-0 flex-1">
          <Rail />
          <Sidebar />
          <Content />
          <Scrollbar />
        </div>
      </div>
      <Taskbar />
    </div>
  );
}
